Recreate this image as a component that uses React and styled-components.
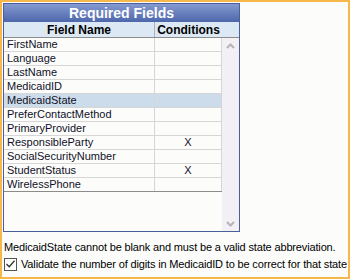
import React, { useState } from "react";
import styled, { createGlobalStyle } from "styled-components";

const GlobalStyle = createGlobalStyle`
  html, body {
    margin: 0;
    padding: 0;
    background: #fcfdfb;
  }
  * {
    box-sizing: border-box;
  }
`;

const Frame = styled.div`
  width: 350px;
  height: 279px;
  border: 2px solid #f7b84b;
  background: #fcfdfb;
  padding: 1px;
  font-family: "Liberation Sans", Arial, sans-serif;
  font-size: 11px;
  color: #000;
`;

const Panel = styled.div`
  width: 237px;
  height: 229px;
  border: 1px solid #4a5e9c;
  background: #fff;
  display: flex;
  flex-direction: column;
`;

const Title = styled.div`
  height: 18px;
  background: linear-gradient(#8499d0, #4d67ab);
  color: #fff;
  font-weight: bold;
  font-size: 14px;
  display: flex;
  align-items: center;
  justify-content: center;
`;

const HeadRow = styled.div`
  display: grid;
  grid-template-columns: 151px 67px 17px;
  height: 16px;
  background: #dce8f3;
  border-bottom: 1px solid #8c8c8c;
`;

const HeadCell = styled.div`
  font-weight: bold;
  font-size: 12px;
  display: flex;
  align-items: center;
  justify-content: center;
  border-right: ${(p) => (p.$divider ? "1px solid #a8b4c0" : "none")};
`;

const Body = styled.div`
  flex: 1;
  display: flex;
`;

const Grid = styled.div`
  width: 218px;
  background: #fcfdfb;
`;

const Row = styled.div`
  display: grid;
  grid-template-columns: 151px 67px;
  height: 14px;
  background: ${(p) => (p.$selected ? "#cddcea" : "#fcfdfb")};
  border-bottom: 1px solid ${(p) => (p.$last ? "#8c8c8c" : "#d6d6d6")};
`;

const Cell = styled.div`
  border-right: 1px solid #d6d6d6;
  padding-left: ${(p) => (p.$center ? "0" : "3px")};
  text-align: ${(p) => (p.$center ? "center" : "left")};
  line-height: 13px;
  white-space: nowrap;
  overflow: hidden;
  color: #101028;
`;

const Scrollbar = styled.div`
  width: 17px;
  background: #f2f0f4;
  display: flex;
  flex-direction: column;
  justify-content: space-between;
  align-items: center;
  padding: 5px 0 4px;
`;

const Footer = styled.div`
  padding: 8px 0 0 1px;
  display: flex;
  flex-direction: column;
  gap: 3px;
  letter-spacing: -0.15px;
  white-space: nowrap;
`;

const Note = styled.div`
  line-height: 14px;
`;

const CheckLine = styled.label`
  display: flex;
  align-items: center;
  gap: 4px;
  line-height: 14px;
`;

const Box = styled.span`
  width: 13px;
  height: 13px;
  flex: none;
  border: 1px solid #555;
  background: #fff;
  display: flex;
  align-items: center;
  justify-content: center;
`;

const Chevron = ({ down }) => (
  <svg width="9" height="6" viewBox="0 0 9 6">
    <path
      d={down ? "M1 1 L4.5 4.5 L8 1" : "M1 5 L4.5 1.5 L8 5"}
      fill="none"
      stroke="#b4b4b4"
      strokeWidth="2"
    />
  </svg>
);

const fields = [
  { name: "FirstName" },
  { name: "Language" },
  { name: "LastName" },
  { name: "MedicaidID" },
  { name: "MedicaidState" },
  { name: "PreferContactMethod" },
  { name: "PrimaryProvider" },
  { name: "ResponsibleParty", cond: "X" },
  { name: "SocialSecurityNumber" },
  { name: "StudentStatus", cond: "X" },
  { name: "WirelessPhone" },
];

export default function App() {
  const [selected] = useState("MedicaidState");
  const [checked, setChecked] = useState(true);

  return (
    <>
      <GlobalStyle />
      <Frame>
        <Panel>
          <Title>Required Fields</Title>
          <HeadRow>
            <HeadCell $divider>Field Name</HeadCell>
            <HeadCell>Conditions</HeadCell>
            <div />
          </HeadRow>
          <Body>
            <Grid>
              {fields.map((f, i) => (
                <Row
                  key={f.name}
                  $selected={f.name === selected}
                  $last={i === fields.length - 1}
                >
                  <Cell>{f.name}</Cell>
                  <Cell $center>{f.cond || ""}</Cell>
                </Row>
              ))}
            </Grid>
            <Scrollbar>
              <Chevron />
              <Chevron down />
            </Scrollbar>
          </Body>
        </Panel>
        <Footer>
          <Note>
            MedicaidState cannot be blank and must be a valid state abbreviation.
          </Note>
          <CheckLine onClick={() => setChecked(!checked)}>
            <Box>
              {checked && (
                <svg width="9" height="8" viewBox="0 0 9 8">
                  <path d="M0.5 4 L3.2 6.8 L8.5 0.8" fill="none" stroke="#333" strokeWidth="1.3" />
                </svg>
              )}
            </Box>
            Validate the number of digits in MedicaidID to be correct for that state
          </CheckLine>
        </Footer>
      </Frame>
    </>
  );
}
